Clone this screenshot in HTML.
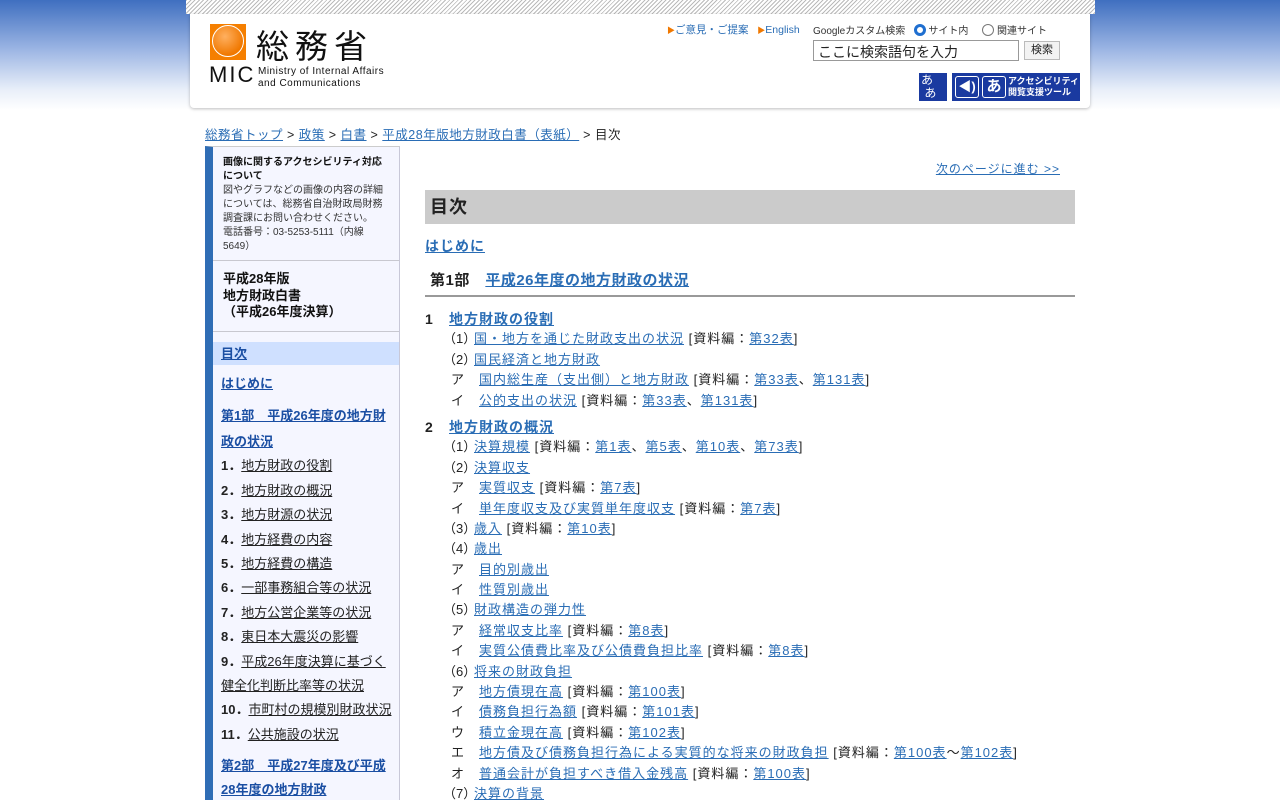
<!DOCTYPE html>
<html style="background:#fff"><head><meta charset="utf-8"><style>
*{margin:0;padding:0;box-sizing:border-box}
html,body{width:1280px;height:800px;overflow:hidden}
body{font-family:"Liberation Sans","Noto Sans CJK JP",sans-serif;color:#222;background:#fff;position:relative}
.grad{position:absolute;left:0;top:0;width:1280px;height:112px;background:linear-gradient(#3f6fc0 0,#9db6e4 50px,#e9eff9 90px,#fff 110px);}
a{color:#2a6db5}
.hatch{position:absolute;left:186px;top:0;width:909px;height:14px;background:repeating-linear-gradient(135deg,#bbb 0 1px,#fff 1px 3px);}
.hdr{position:absolute;left:190px;top:14px;width:900px;height:94px;background:#fff;border-radius:0 0 4px 4px;box-shadow:0 1px 3px rgba(0,0,0,.25);}
.crumb{position:absolute;left:205px;top:124px;font-size:12.5px;letter-spacing:.5px}
.side{position:absolute;left:205px;top:146px;width:195px;height:660px;background:#f5f6ff;border-left:8px solid #2f6db5;border-right:1px solid #c8c8d8;border-top:1px solid #ccc}
.side .sec{padding:9px 10px 8px 10px;border-bottom:1px solid #c8c8d0}
.side .n{font-size:13px;line-height:24.4px;padding-left:8px;padding-right:6px}
.side .n b{color:#222}
.side .n a{color:#222}
.side .h{font-size:13px;font-weight:bold;line-height:24.4px;padding-left:8px;padding-right:10px}
.side .h a{color:#1b4fa3}
.main{position:absolute;left:425px;top:150px;width:650px;font-size:13px;letter-spacing:1px}
.row{height:20.4px;line-height:20.4px;white-space:nowrap}
.row .p{display:inline-block;letter-spacing:0}
.row.i .p{margin-left:18px;width:31px}
.row.k .p{margin-left:26px;width:28px}
.num{display:inline-block;width:24px;font-weight:bold}
</style></head><body>
<div class="grad"></div>
<div class="hatch"></div>
<div class="hdr">
 <div style="position:absolute;left:20px;top:10px;width:36px;height:36px;background:#f57f00"><div style="position:absolute;left:2px;top:1px;width:32px;height:32px;border-radius:50%;background:radial-gradient(circle at 40% 35%,#ffb060,#f07800 70%);border:1px solid #fff"></div></div>
 <div style="position:absolute;left:66px;top:6px;font-size:33px;letter-spacing:6px;color:#111">総務省</div>
 <div style="position:absolute;left:19px;top:48px;font-size:22px;letter-spacing:2px;color:#111">MIC</div>
 <div style="position:absolute;left:68px;top:52px;font-size:10px;line-height:12px;color:#111;letter-spacing:.5px">Ministry of Internal Affairs<br>and Communications</div>
 <div style="position:absolute;left:477px;top:8px;font-size:10.5px;color:#2a6db5;white-space:nowrap"><span style="color:#f07800;font-size:8px">▶</span>ご意見・ご提案 &nbsp;&nbsp;<span style="color:#f07800;font-size:8px">▶</span>English</div>
 <div style="position:absolute;left:623px;top:8px;font-size:10px;color:#333;white-space:nowrap">Googleカスタム検索 &nbsp; <span style="display:inline-block;width:12px;height:12px;border-radius:50%;border:3px solid #1f6fd0;vertical-align:-2px"></span> サイト内 &nbsp;&nbsp;&nbsp; <span style="display:inline-block;width:12px;height:12px;border-radius:50%;border:1px solid #777;vertical-align:-2px"></span> 関連サイト</div>
 <div style="position:absolute;left:623px;top:26px;width:206px;height:21px;border:1px solid #999;font-size:14px;padding:1px 4px">ここに検索語句を入力</div>
 <div style="position:absolute;left:834px;top:27px;width:36px;height:19px;border:1px solid #bbb;background:#f3f3f3;font-size:11px;text-align:center;line-height:17px">検索</div>
 <div style="position:absolute;left:729px;top:59px;width:28px;height:28px;background:#1a3aa0;color:#fff;font-size:12px;line-height:13px;padding:1px 2px">あ<br>&nbsp;あ</div>
 <div style="position:absolute;left:762px;top:59px;width:128px;height:28px;background:#1a3aa0;color:#fff;font-size:9px;font-weight:bold;padding:3px 0 0 56px;line-height:11px">アクセシビリティ<br>閲覧支援ツール<span style="position:absolute;left:3px;top:3px;width:24px;height:22px;border:1px solid #fff;border-radius:3px;font-size:13px;text-align:center;line-height:20px">◀)</span><span style="position:absolute;left:30px;top:3px;width:24px;height:22px;border:1px solid #fff;border-radius:3px;font-size:15px;text-align:center;line-height:20px">あ</span></div>
</div>
<div class="crumb"><a href="#">総務省トップ</a> &gt; <a href="#">政策</a> &gt; <a href="#">白書</a> &gt; <a href="#">平成28年版地方財政白書（表紙）</a> &gt; 目次</div>
<div class="side">
 <div class="sec" style="font-size:10px;line-height:14px;height:114px;color:#333"><b style="color:#111">画像に関するアクセシビリティ対応について</b><br>図やグラフなどの画像の内容の詳細については、総務省自治財政局財務調査課にお問い合わせください。<br>電話番号：03-5253-5111（内線5649）</div>
 <div class="sec" style="font-size:13px;font-weight:bold;line-height:16.5px;height:71px;padding-top:10px;color:#111">平成28年版<br>地方財政白書<br>（平成26年度決算）</div>
 <div style="height:10px"></div>
 <div class="h" style="background:#cfe0ff;line-height:23px"><a href="#">目次</a></div>
 <div class="h" style="margin-top:7px"><a href="#">はじめに</a></div>
 <div class="h" style="margin-top:7px;line-height:25.5px"><a href="#">第1部　平成26年度の地方財政の状況</a></div>
 <div class="n"><b>1．</b><a href="#">地方財政の役割</a></div>
 <div class="n"><b>2．</b><a href="#">地方財政の概況</a></div>
 <div class="n"><b>3．</b><a href="#">地方財源の状況</a></div>
 <div class="n"><b>4．</b><a href="#">地方経費の内容</a></div>
 <div class="n"><b>5．</b><a href="#">地方経費の構造</a></div>
 <div class="n"><b>6．</b><a href="#">一部事務組合等の状況</a></div>
 <div class="n"><b>7．</b><a href="#">地方公営企業等の状況</a></div>
 <div class="n"><b>8．</b><a href="#">東日本大震災の影響</a></div>
 <div class="n"><b>9．</b><a href="#">平成26年度決算に基づく健全化判断比率等の状況</a></div>
 <div class="n"><b>10．</b><a href="#">市町村の規模別財政状況</a></div>
 <div class="n"><b>11．</b><a href="#">公共施設の状況</a></div>
 <div class="h" style="margin-top:7px;line-height:24px"><a href="#">第2部　平成27年度及び平成28年度の地方財政</a></div>
</div>
<div class="main">
 <div style="text-align:right;padding-right:15px;font-size:12px;height:40px;padding-top:10px"><a href="#">次のページに進む &gt;&gt;</a></div>
 <div style="background:#cbcbcb;height:34px;font-size:18px;font-weight:bold;line-height:34px;padding-left:5px;color:#222">目次</div>
 <div style="margin-top:12px;font-size:14px;font-weight:bold"><a href="#">はじめに</a></div>
 <div style="margin-top:10px;font-size:15px;font-weight:bold;padding:3px 5px 5px;border-bottom:2px solid #999;letter-spacing:.5px">第1部　<a href="#">平成26年度の地方財政の状況</a></div>
 <div style="height:12px"></div>
 <div class="row" style="font-size:14px;font-weight:bold"><span class="num">1</span><a href="#">地方財政の役割</a></div>
 <div class="row i"><span class="p">（1）</span><a href="#">国・地方を通じた財政支出の状況</a> [資料編：<a href="#">第32表</a>]</div>
 <div class="row i"><span class="p">（2）</span><a href="#">国民経済と地方財政</a></div>
 <div class="row k"><span class="p">ア</span><a href="#">国内総生産（支出側）と地方財政</a> [資料編：<a href="#">第33表</a>、<a href="#">第131表</a>]</div>
 <div class="row k"><span class="p">イ</span><a href="#">公的支出の状況</a> [資料編：<a href="#">第33表</a>、<a href="#">第131表</a>]</div>
 <div class="row" style="font-size:14px;font-weight:bold;margin-top:6px"><span class="num">2</span><a href="#">地方財政の概況</a></div>
 <div class="row i"><span class="p">（1）</span><a href="#">決算規模</a> [資料編：<a href="#">第1表</a>、<a href="#">第5表</a>、<a href="#">第10表</a>、<a href="#">第73表</a>]</div>
 <div class="row i"><span class="p">（2）</span><a href="#">決算収支</a></div>
 <div class="row k"><span class="p">ア</span><a href="#">実質収支</a> [資料編：<a href="#">第7表</a>]</div>
 <div class="row k"><span class="p">イ</span><a href="#">単年度収支及び実質単年度収支</a> [資料編：<a href="#">第7表</a>]</div>
 <div class="row i"><span class="p">（3）</span><a href="#">歳入</a> [資料編：<a href="#">第10表</a>]</div>
 <div class="row i"><span class="p">（4）</span><a href="#">歳出</a></div>
 <div class="row k"><span class="p">ア</span><a href="#">目的別歳出</a></div>
 <div class="row k"><span class="p">イ</span><a href="#">性質別歳出</a></div>
 <div class="row i"><span class="p">（5）</span><a href="#">財政構造の弾力性</a></div>
 <div class="row k"><span class="p">ア</span><a href="#">経常収支比率</a> [資料編：<a href="#">第8表</a>]</div>
 <div class="row k"><span class="p">イ</span><a href="#">実質公債費比率及び公債費負担比率</a> [資料編：<a href="#">第8表</a>]</div>
 <div class="row i"><span class="p">（6）</span><a href="#">将来の財政負担</a></div>
 <div class="row k"><span class="p">ア</span><a href="#">地方債現在高</a> [資料編：<a href="#">第100表</a>]</div>
 <div class="row k"><span class="p">イ</span><a href="#">債務負担行為額</a> [資料編：<a href="#">第101表</a>]</div>
 <div class="row k"><span class="p">ウ</span><a href="#">積立金現在高</a> [資料編：<a href="#">第102表</a>]</div>
 <div class="row k"><span class="p">エ</span><a href="#">地方債及び債務負担行為による実質的な将来の財政負担</a> [資料編：<a href="#">第100表</a>～<a href="#">第102表</a>]</div>
 <div class="row k"><span class="p">オ</span><a href="#">普通会計が負担すべき借入金残高</a> [資料編：<a href="#">第100表</a>]</div>
 <div class="row i"><span class="p">（7）</span><a href="#">決算の背景</a></div>
</div>
</body></html>
